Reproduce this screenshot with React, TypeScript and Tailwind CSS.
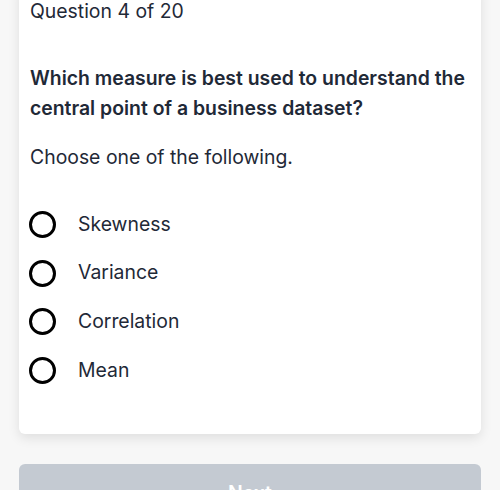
export default function App() {
  const options = ["Skewness", "Variance", "Correlation", "Mean"];
  return (
    <div
      className="h-[490px] bg-[#f7f7f7] overflow-hidden"
      style={{ fontFamily: "Inter, 'Noto Sans', sans-serif" }}
    >
      <div className="mx-[19px] -mt-[15px] bg-white rounded-md shadow-[0_4px_12px_rgba(0,0,0,0.10)] px-[11px] pt-[12px] pb-[39px]">
        <div className="text-[19.4px] leading-[28px] text-[#1f2937]">Question 4 of 20</div>
        <div className="mt-[38px] text-[19.4px] leading-[30px] font-semibold text-[#1f2937]">
          Which measure is best used to understand the central point of a business dataset?
        </div>
        <div className="mt-[20px] text-[19.4px] leading-[28px] text-[#1f2937]">Choose one of the following.</div>
        <div className="mt-[29px] flex flex-col">
          {options.map((o) => (
            <div key={o} className="flex items-center h-[48.7px]">
              <span className="w-[27px] h-[27px] rounded-full border-[3px] border-black ml-[-1px]" />
              <span className="ml-[22px] text-[19.4px] text-[#1f2937]">{o}</span>
            </div>
          ))}
        </div>
      </div>
      <div className="mx-[19px] mt-[30px] h-[60px] rounded-md bg-[#c4cad2] flex items-center justify-center text-white text-[19.4px] font-semibold">
        Next
      </div>
    </div>
  );
}
